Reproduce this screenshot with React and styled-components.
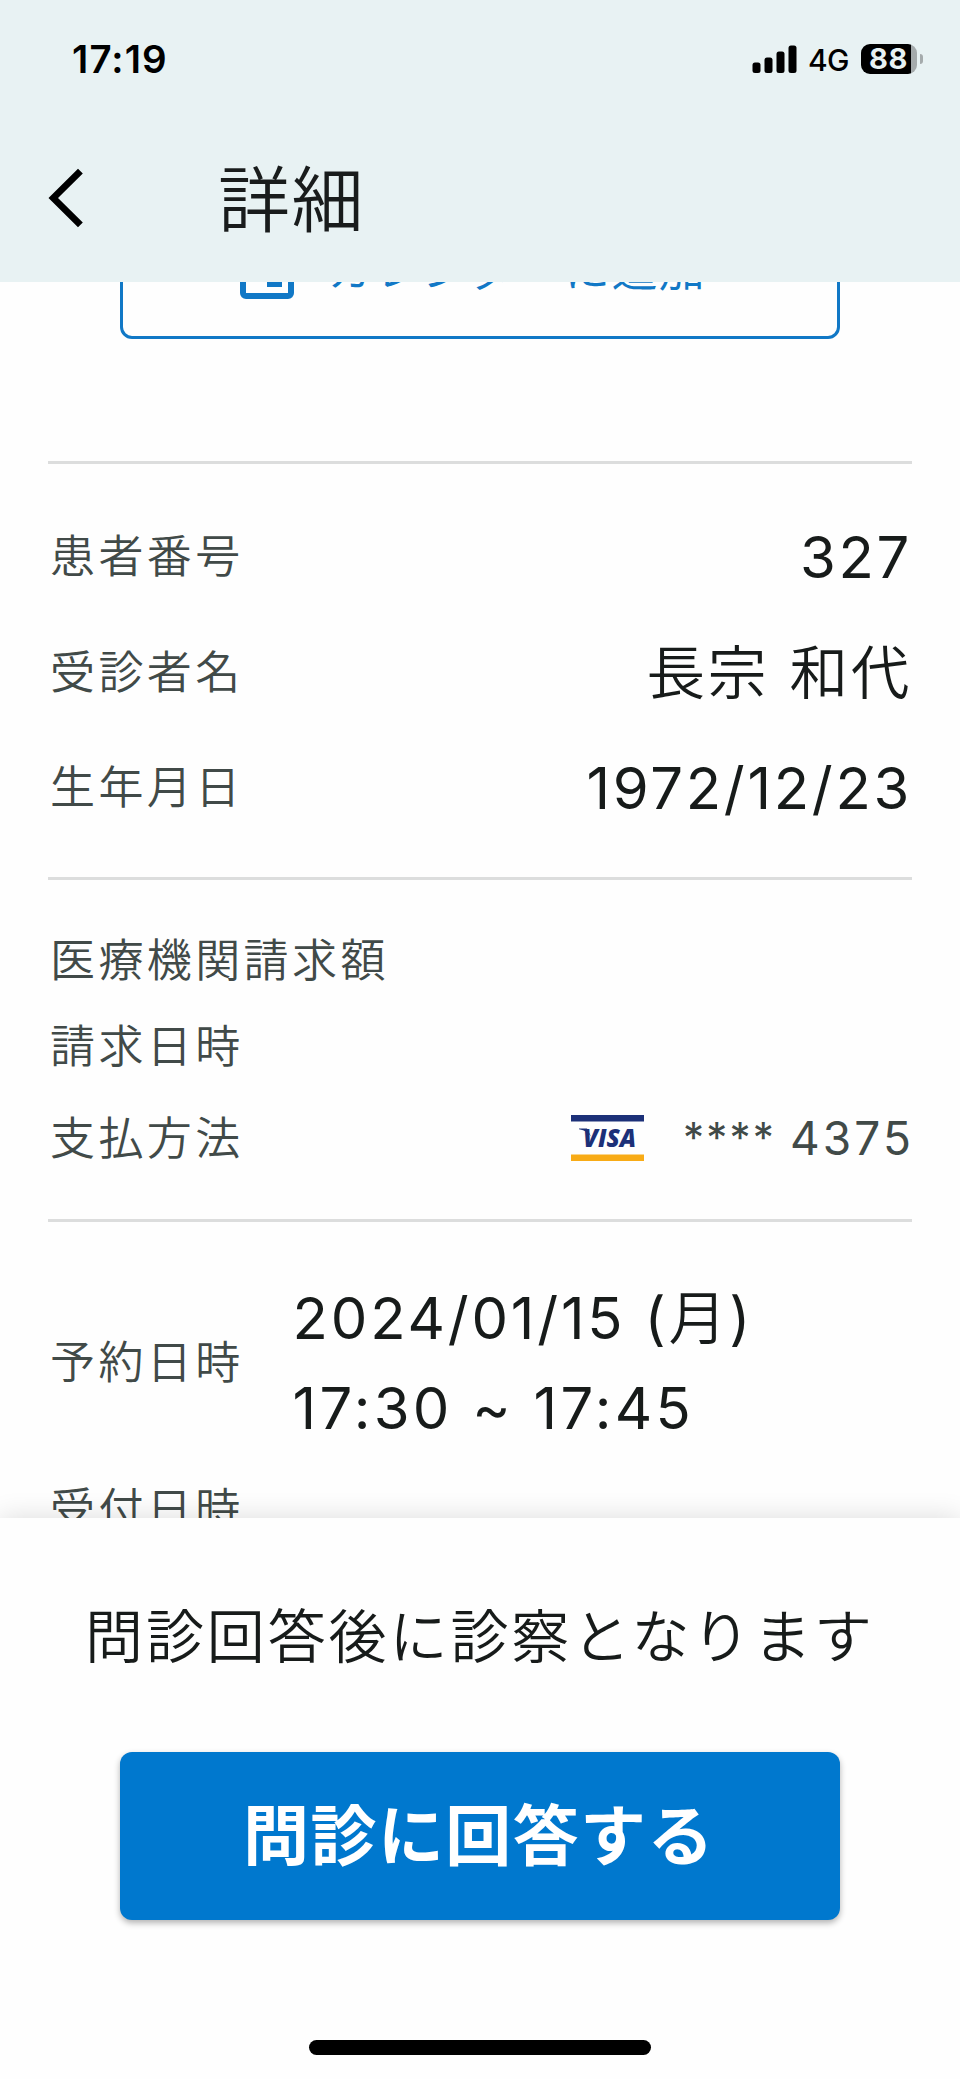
import React from "react";
import styled, { createGlobalStyle } from "styled-components";

const GlobalStyle = createGlobalStyle`
  body {
    margin: 0;
    background: #fefefe;
  }
  * {
    box-sizing: border-box;
  }
`;

const cjk = `"Noto Sans CJK JP", sans-serif`;
const latin = `Inter, "Noto Sans CJK JP", sans-serif`;

const Screen = styled.div`
  display: flex;
  flex-direction: column;
  width: 960px;
  height: 2079px;
  overflow: hidden;
  background: #fefefe;
  color: #171b1a;
  font-family: ${latin};
`;

const Header = styled.header`
  flex: none;
  height: 282px;
  background: #e8f2f3;
`;

const StatusBar = styled.div`
  display: flex;
  align-items: center;
  justify-content: space-between;
  height: 118px;
  padding: 0 37px 0 72px;
  color: #000;
`;

const Clock = styled.span`
  font-size: 38.5px;
  font-weight: 600;
  letter-spacing: 1.1px;
`;

const StatusIcons = styled.div`
  display: flex;
  align-items: center;
`;

const Network = styled.span`
  margin: 2px 12px 0 11px;
  font-size: 30px;
  font-weight: 500;
  line-height: 36px;
  letter-spacing: -0.5px;
`;

const Battery = styled.div`
  display: flex;
  align-items: center;
  justify-content: center;
  width: 56px;
  height: 30px;
  padding-right: 1px;
  border-radius: 9px;
  background: linear-gradient(to right, #000 50px, #a5abac 50px);
  color: #e8f2f3;
  font-size: 29px;
  font-weight: 700;
  line-height: 30px;
  letter-spacing: 0.5px;
`;

const BatteryTip = styled.div`
  width: 3px;
  height: 10px;
  margin-left: 3px;
  border-radius: 0 5px 5px 0;
  background: #a5abac;
`;

const TitleBar = styled.div`
  display: flex;
  align-items: center;
  height: 160px;
  padding-left: 48px;
`;

const BackButton = styled.button`
  display: flex;
  width: 35px;
  padding: 0;
  border: 0;
  background: none;
`;

const Title = styled.h1`
  margin: 0 0 0 135px;
  padding-bottom: 7px;
  color: #191c1c;
  font-family: ${cjk};
  font-size: 72px;
  font-weight: 350;
  line-height: 100px;
  letter-spacing: 1.4px;
`;

const Content = styled.main`
  flex: 1;
  min-height: 0;
  padding: 0 48px;
  overflow: hidden;
`;

const CalendarButton = styled.button`
  display: flex;
  align-items: center;
  width: 720px;
  height: 144px;
  margin: -87px 72px 122px;
  padding: 0 0 0 108px;
  border: 3px solid #1178c6;
  border-radius: 12px;
  background: none;
  color: #1178c6;
  font-family: ${cjk};
  font-size: 46px;
  font-weight: 350;
  line-height: 60px;
  letter-spacing: 1.4px;
  white-space: nowrap;

  svg {
    flex: none;
    margin: 10px 24px 0 0;
  }
`;

const ButtonText = styled.span`
  padding-bottom: 2px;
`;

const Section = styled.section`
  padding: ${(p) => p.$top}px 0 ${(p) => p.$bottom}px;
  border-top: 3px solid #dcdddd;
`;

const Row = styled.div`
  display: flex;
  align-items: center;
  justify-content: ${(p) => (p.$start ? "flex-start" : "space-between")};
  height: ${(p) => p.$height}px;
  padding: 0 1px 0 2px;
`;

const Label = styled.span`
  padding-bottom: 5px;
  color: #414a48;
  font-family: ${cjk};
  font-size: 45px;
  font-weight: 350;
  line-height: 60px;
  letter-spacing: 3.4px;
  white-space: nowrap;
`;

const Value = styled.span`
  margin-right: -1px;
  font-family: ${latin};
  font-size: 58px;
  font-weight: 400;
  line-height: 90px;
  letter-spacing: 2.7px;
  white-space: nowrap;
`;

const NameValue = styled(Value)`
  padding-bottom: 6px;
  font-family: ${cjk};
  font-size: 58.5px;
  font-weight: 350;
  word-spacing: 5px;
`;

const DateValue = styled(Value)`
  margin-left: 49px;
  letter-spacing: 2.8px;
`;

const Weekday = styled.span`
  font-weight: 350;
`;

const TimeRange = styled.span`
  letter-spacing: 3.3px;
`;

const Payment = styled.div`
  display: flex;
  align-items: center;
  margin-right: -3px;
  color: #414a48;
  font-size: 46px;
  line-height: 60px;
  letter-spacing: 3.1px;
  white-space: pre;
`;

const Mask = styled.span`
  margin-left: 39px;
  font-size: 42px;
  letter-spacing: 2.2px;
`;

const Sheet = styled.footer`
  position: relative;
  display: flex;
  flex: none;
  flex-direction: column;
  align-items: center;
  height: 561px;
  padding-top: 73px;
  background: #fefefe;
  box-shadow: 0 0 26px rgba(0, 0, 0, 0.14);
`;

const Message = styled.p`
  margin: 0;
  font-family: ${cjk};
  font-size: 58px;
  font-weight: 350;
  line-height: 84px;
  letter-spacing: 2.9px;
  white-space: nowrap;
`;

const AnswerButton = styled.button`
  width: 720px;
  height: 168px;
  margin-top: 77px;
  padding: 0 2px 10px 0;
  border: 0;
  border-radius: 12px;
  background: #0078ce;
  box-shadow: 0 3px 6px rgba(0, 0, 0, 0.3);
  color: #fff;
  font-family: ${cjk};
  font-size: 66px;
  font-weight: 700;
  line-height: 90px;
  letter-spacing: 1.4px;
`;

const HomeIndicator = styled.div`
  width: 342px;
  height: 15px;
  margin-top: 120px;
  border-radius: 8px;
  background: #000;
`;

const signalBars = [
  { x: 0, height: 10.5 },
  { x: 12, height: 15.5 },
  { x: 24, height: 21.5 },
  { x: 36, height: 27.5 },
];

function Signal() {
  return (
    <svg width="45" height="28" viewBox="0 0 45 28">
      {signalBars.map((bar) => (
        <rect key={bar.x} x={bar.x + 0.5} y={28 - bar.height} width="8" height={bar.height} rx="2.5" />
      ))}
    </svg>
  );
}

function BackIcon() {
  return (
    <svg width="35" height="60" viewBox="0 0 35 60">
      <path d="M30 0.7 L34.8 5.5 L10 30 L34.8 54.5 L30 59.3 L0.5 30 Z" />
    </svg>
  );
}

function CalendarIcon() {
  return (
    <svg width="72" height="72" viewBox="0 0 24 24" fill="currentColor">
      <path d="M17 12h-5v5h5v-5zM16 1v2H8V1H6v2H5a2 2 0 0 0-2 2v14a2 2 0 0 0 2 2h14a2 2 0 0 0 2-2V5a2 2 0 0 0-2-2h-1V1h-2zm3 18H5V8h14v11z" />
    </svg>
  );
}

function VisaLogo() {
  return (
    <svg width="73" height="46" viewBox="0 0 73 46">
      <rect width="73" height="6.5" fill="#1c3078" />
      <rect y="39.5" width="73" height="6.5" fill="#f8ab16" />
      <path d="M8 13.6h8l4 8c-2.5-4-6-6.6-12-7.4z" fill="#1c3078" />
      <text
        x="12"
        y="32.3"
        textLength="53"
        lengthAdjust="spacingAndGlyphs"
        fill="#1c3078"
        fontFamily="Open Sans"
        fontSize="25.5"
        fontWeight="800"
        fontStyle="italic"
        letterSpacing="0"
      >
        VISA
      </text>
    </svg>
  );
}

function App() {
  return (
    <Screen>
      <GlobalStyle />
      <Header>
        <StatusBar>
          <Clock>17:19</Clock>
          <StatusIcons>
            <Signal />
            <Network>4G</Network>
            <Battery>88</Battery>
            <BatteryTip />
          </StatusIcons>
        </StatusBar>
        <TitleBar>
          <BackButton aria-label="戻る">
            <BackIcon />
          </BackButton>
          <Title>詳細</Title>
        </TitleBar>
      </Header>

      <Content>
        <CalendarButton>
          <CalendarIcon />
          <ButtonText>カレンダーに追加</ButtonText>
        </CalendarButton>

        <Section $top={35} $bottom={31.5}>
          <Row $height={115.5}>
            <Label>患者番号</Label>
            <Value>327</Value>
          </Row>
          <Row $height={115.5}>
            <Label>受診者名</Label>
            <NameValue>長宗 和代</NameValue>
          </Row>
          <Row $height={115.5}>
            <Label>生年月日</Label>
            <Value>1972/12/23</Value>
          </Row>
        </Section>

        <Section $top={37} $bottom={32}>
          <Row $height={86.5}>
            <Label>医療機関請求額</Label>
          </Row>
          <Row $height={86.5}>
            <Label>請求日時</Label>
          </Row>
          <Row $height={96.5}>
            <Label>支払方法</Label>
            <Payment>
              <VisaLogo />
              <Mask>**** </Mask>
              <span>4375</span>
            </Payment>
          </Row>
        </Section>

        <Section $top={51} $bottom={0}>
          <Row $height={180} $start>
            <Label>予約日時</Label>
            <DateValue>
              2024/01/15 (<Weekday>月</Weekday>)
              <br />
              <TimeRange>17:30 ~ 17:45</TimeRange>
            </DateValue>
          </Row>
          <Row $height={113}>
            <Label>受付日時</Label>
          </Row>
        </Section>
      </Content>

      <Sheet>
        <Message>問診回答後に診察となります</Message>
        <AnswerButton>問診に回答する</AnswerButton>
        <HomeIndicator />
      </Sheet>
    </Screen>
  );
}

export default App;
